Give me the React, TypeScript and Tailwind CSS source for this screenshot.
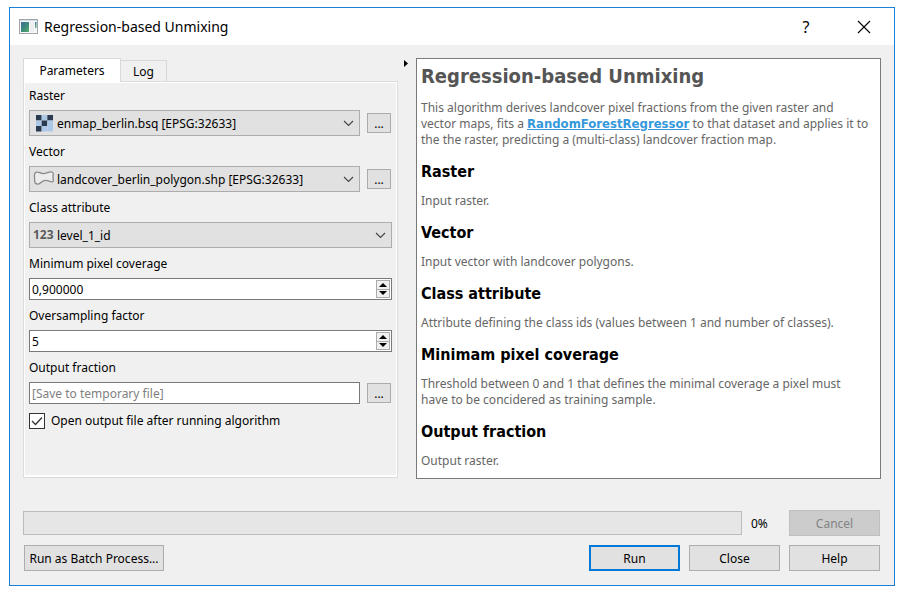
import { useState, type ReactNode } from "react";

const HELP_SECTIONS = [
  { title: "Raster", text: "Input raster." },
  { title: "Vector", text: "Input vector with landcover polygons." },
  {
    title: "Class attribute",
    text: "Attribute defining the class ids (values between 1 and number of classes).",
  },
  {
    title: "Minimam pixel coverage",
    text: "Threshold between 0 and 1 that defines the minimal coverage a pixel must have to be concidered as training sample.",
  },
  { title: "Output fraction", text: "Output raster." },
];

function WindowIcon() {
  return (
    <svg width="19" height="15" viewBox="0 0 19 15" aria-hidden="true">
      <defs>
        <linearGradient id="appFill" x1="0" y1="0" x2="1" y2="1">
          <stop offset="0" stopColor="#3d6c9c" />
          <stop offset="0.6" stopColor="#3f8f78" />
          <stop offset="1" stopColor="#5aae6c" />
        </linearGradient>
        <linearGradient id="appStreak" x1="0" y1="0" x2="0" y2="1">
          <stop offset="0" stopColor="#3d7a96" />
          <stop offset="1" stopColor="#6fb392" />
        </linearGradient>
      </defs>
      <rect x="0.5" y="0.5" width="18" height="14" fill="#f6f7f9" stroke="#a2a6ab" />
      <rect x="1" y="1" width="17" height="1" fill="#cfdbe6" />
      <rect x="2" y="3" width="8" height="10" fill="url(#appFill)" />
      <rect x="11" y="3" width="4" height="10" fill="#eceef1" />
      <rect x="16" y="3" width="1.500" height="6" fill="url(#appStreak)" />
    </svg>
  );
}

function RasterIcon() {
  const dark = ["0,0", "2,0", "1,1", "0,2"];
  return (
    <svg width="22" height="18" viewBox="0 0 22 18" aria-hidden="true">
      {[0, 1, 2].map((row) =>
        [0, 1, 2].map((col) => (
          <rect
            key={`${col}${row}`}
            x={3 + col * 5.67}
            y={1 + row * 5.5}
            width="5.67"
            height="5.5"
            fill={dark.includes(`${col},${row}`) ? "#2b3b4f" : "#adc8e6"}
          />
        )),
      )}
    </svg>
  );
}

function PolygonIcon() {
  return (
    <svg width="22" height="18" viewBox="0 0 22 18" aria-hidden="true">
      <path
        d="M3.500 2.200C5.500 1.400 7 3.400 10 3.600 13 3.800 15 2 18 1.800 20.500 1.700 20.600 4 20 6 19.500 8 20.800 9.500 20.300 11 19.600 12.800 17.500 11.600 15.500 10.800 12.500 9.700 10 10.500 8 12.500 6 14.500 3.500 14.500 2.300 13 1.200 11.500 1.800 9.500 1.500 7.500 1.200 5.500 1.500 3 3.500 2.200Z"
        fill="#ececec"
        stroke="#8a8a8a"
        strokeWidth="1.300"
      />
    </svg>
  );
}

function NumberIcon() {
  return (
    <span aria-hidden="true" className="block leading-[18px] font-bold text-[#5c5c5c]">
      123
    </span>
  );
}

function ComboBox({ id, icon, value }: { id: string; icon: ReactNode; value: string }) {
  return (
    <div className="relative min-w-0 flex-1">
      <select
        id={id}
        className="block h-[26px] w-full appearance-none border border-[#acacac] bg-[#e1e1e1] pt-px pr-6 pl-[27px] outline-none"
      >
        <option>{value}</option>
      </select>
      <span className="pointer-events-none absolute top-1 left-1">{icon}</span>
      <svg
        className="pointer-events-none absolute top-[10px] right-[6px]"
        width="11"
        height="7"
        viewBox="0 0 11 7"
        aria-hidden="true"
      >
        <path d="M1 1l4.500 4.500L10 1" fill="none" stroke="#444" strokeWidth="1.100" />
      </svg>
    </div>
  );
}

function BrowseButton({ label }: { label: string }) {
  return (
    <button
      type="button"
      aria-label={label}
      className="mr-px h-5 w-6 shrink-0 border border-[#acacac] bg-[#e1e1e1] pt-px leading-4"
    >
      ...
    </button>
  );
}

function SpinBox({ id, initial }: { id: string; initial: string }) {
  const [value, setValue] = useState(initial);
  return (
    <div className="flex h-[22px] border border-[#7a7a7a] bg-white p-px">
      <input
        id={id}
        value={value}
        onChange={(e) => setValue(e.target.value)}
        className="min-w-0 flex-1 bg-transparent pt-px pl-px outline-none"
      />
      <div className="flex w-[14px] flex-col border border-[#acacac] bg-[#f0f0f0]">
        <button type="button" aria-label="Increase" className="flex flex-1 items-center justify-center">
          <svg width="8" height="4" viewBox="0 0 8 4" aria-hidden="true">
            <path d="M4 0l4 4H0z" fill="#000" />
          </svg>
        </button>
        <button
          type="button"
          aria-label="Decrease"
          className="flex flex-1 items-center justify-center border-t border-[#acacac]"
        >
          <svg width="8" height="4" viewBox="0 0 8 4" aria-hidden="true">
            <path d="M0 0h8L4 4z" fill="#000" />
          </svg>
        </button>
      </div>
    </div>
  );
}

function Field({ id, label, children }: { id: string; label: string; children: ReactNode }) {
  return (
    <div className="flex flex-col gap-[6px]">
      <label htmlFor={id} className="leading-4">
        {label}
      </label>
      {children}
    </div>
  );
}

function ParameterPanel() {
  const [open, setOpen] = useState(true);
  return (
    <section className="mb-px flex w-[375px] shrink-0 flex-col">
      <div role="tablist" className="flex items-end">
        <button
          type="button"
          role="tab"
          aria-selected="true"
          className="relative -mb-px h-6 w-[98px] border border-b-0 border-[#d9d9d9] bg-white leading-4"
        >
          Parameters
        </button>
        <button
          type="button"
          role="tab"
          aria-selected="false"
          className="h-[21px] w-[46px] border border-b-0 border-l-0 border-[#d9d9d9] bg-[#f0f0f0] pt-px leading-4"
        >
          Log
        </button>
      </div>
      <div className="flex-1 border border-[#dcdcdc] bg-white p-px pb-[2px]">
        <div className="flex h-full flex-col gap-2 bg-[#f0f0f0] px-1 pt-[5px]">
          <Field id="raster" label="Raster">
            <div className="flex items-center gap-[7px]">
              <ComboBox id="raster" icon={<RasterIcon />} value="enmap_berlin.bsq [EPSG:32633]" />
              <BrowseButton label="Browse raster" />
            </div>
          </Field>
          <Field id="vector" label="Vector">
            <div className="flex items-center gap-[7px]">
              <ComboBox id="vector" icon={<PolygonIcon />} value="landcover_berlin_polygon.shp [EPSG:32633]" />
              <BrowseButton label="Browse vector" />
            </div>
          </Field>
          <Field id="attribute" label="Class attribute">
            <div className="flex">
              <ComboBox id="attribute" icon={<NumberIcon />} value="level_1_id" />
            </div>
          </Field>
          <Field id="coverage" label="Minimum pixel coverage">
            <SpinBox id="coverage" initial="0,900000" />
          </Field>
          <Field id="oversampling" label="Oversampling factor">
            <SpinBox id="oversampling" initial="5" />
          </Field>
          <Field id="output" label="Output fraction">
            <div className="flex items-center gap-[7px]">
              <input
                id="output"
                placeholder="[Save to temporary file]"
                className="h-[22px] min-w-0 flex-1 border border-[#7a7a7a] bg-white px-[2px] outline-none placeholder:text-[#808080]"
              />
              <BrowseButton label="Browse output" />
            </div>
          </Field>
          <label className="flex items-center gap-[6px] pt-px leading-4">
            <span className="relative block size-4">
              <input
                type="checkbox"
                checked={open}
                onChange={(e) => setOpen(e.target.checked)}
                className="peer block size-4 appearance-none border border-[#333] bg-white"
              />
              <svg
                className="pointer-events-none absolute inset-0 hidden peer-checked:block"
                width="16"
                height="16"
                viewBox="0 0 16 16"
                aria-hidden="true"
              >
                <path d="M3 8l3.500 3.500L13 4.500" fill="none" stroke="#333" strokeWidth="1.300" />
              </svg>
            </span>
            Open output file after running algorithm
          </label>
        </div>
      </div>
    </section>
  );
}

function HelpPanel() {
  return (
    <article className="min-w-0 flex-1 border border-[#7a7a7a] bg-white pt-[5px] pr-[11px] pb-[9px] pl-1 text-[#666]">
      <h1 className="mb-3 font-['DejaVu_Sans_Condensed','DejaVu_Sans',sans-serif] text-[20px] leading-6 font-bold text-[#555]">
        Regression-based Unmixing
      </h1>
      <p className="leading-4">
        This algorithm derives landcover pixel fractions from the given raster and vector maps, fits a{" "}
        <a
          href="#regressor"
          className="font-['DejaVu_Sans_Condensed','DejaVu_Sans',sans-serif] text-[13px] leading-none font-bold text-[#3498db] underline"
        >
          RandomForestRegressor
        </a>{" "}
        to that dataset and applies it to the the raster, predicting a (multi-class) landcover fraction map.
      </p>
      {HELP_SECTIONS.map((section) => (
        <section key={section.title} className="mt-[14px]">
          <h2 className="mb-[11px] font-['DejaVu_Sans_Condensed','DejaVu_Sans',sans-serif] text-[16px] leading-5 font-bold text-black">
            {section.title}
          </h2>
          <p className="leading-4">{section.text}</p>
        </section>
      ))}
    </article>
  );
}

export default function App() {
  return (
    <div className="min-h-screen bg-white pt-[7px] pr-[11px] pb-[13px] pl-[9px] font-['Noto_Sans',sans-serif] text-[12px] text-black">
      <main className="border border-[#1a80d4] bg-[#f0f0f0]">
        <header className="flex h-[37px] items-center bg-white pr-[23px] pl-[9px]">
          <WindowIcon />
          <span className="ml-[6px] flex-1 text-[14px] leading-5">Regression-based Unmixing</span>
          <button type="button" aria-label="Help for this window" className="mr-[45px] w-3 text-[16px] leading-5">
            ?
          </button>
          <button type="button" aria-label="Close window">
            <svg width="14" height="14" viewBox="0 0 14 14" aria-hidden="true">
              <path d="M1 1l12 12M13 1L1 13" fill="none" stroke="#000" strokeWidth="1.100" />
            </svg>
          </button>
        </header>

        <div className="px-[13px] pt-[13px] pb-[14px]">
          <div className="flex">
            <ParameterPanel />
            <button type="button" aria-label="Collapse help" className="flex w-[18px] shrink-0 items-start justify-center pt-[2px] pr-[2px]">
              <svg width="4" height="7" viewBox="0 0 4 7" aria-hidden="true">
                <path d="M0 0l4 3.500L0 7z" fill="#000" />
              </svg>
            </button>
            <HelpPanel />
          </div>

          <div className="mt-[31px] flex items-center pr-px">
            <div
              role="progressbar"
              aria-label="Progress"
              aria-valuenow={0}
              aria-valuemin={0}
              aria-valuemax={100}
              className="h-6 flex-1 border border-[#bcbcbc] bg-[#e6e6e6]"
            />
            <span className="w-[47px] pt-px pl-[9px] leading-4">0%</span>
            <button type="button" disabled className="h-[26px] w-[91px] border border-[#bfbfbf] bg-[#cccccc] pt-px text-[#838383]">
              Cancel
            </button>
          </div>

          <div className="mt-[9px] flex gap-[9px] px-px">
            <button type="button" className="mr-auto h-[26px] w-[140px] border border-[#adadad] bg-[#e1e1e1] pt-px whitespace-nowrap">
              Run as Batch Process...
            </button>
            <button type="button" className="h-[26px] w-[91px] border-2 border-[#0078d7] bg-[#e1e1e1] pt-px">
              Run
            </button>
            <button type="button" className="h-[26px] w-[91px] border border-[#adadad] bg-[#e1e1e1] pt-px">
              Close
            </button>
            <button type="button" className="h-[26px] w-[91px] border border-[#adadad] bg-[#e1e1e1] pt-px">
              Help
            </button>
          </div>
        </div>
      </main>
    </div>
  );
}
